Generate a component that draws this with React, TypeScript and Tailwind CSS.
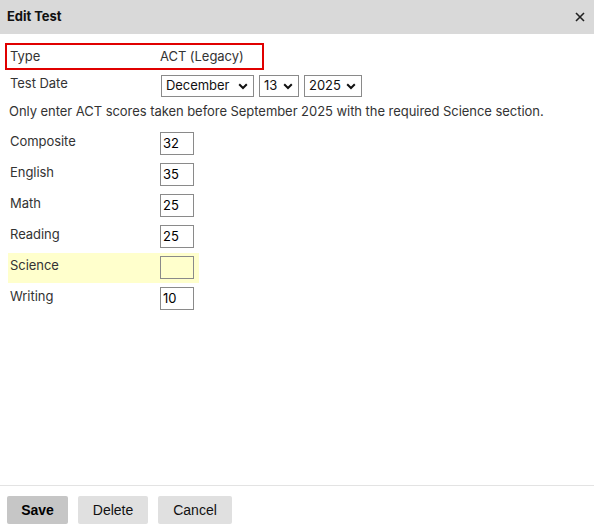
import React from "react";

const font = { fontFamily: 'Inter, "Liberation Sans", Arial, sans-serif' };
const btnFont = { fontFamily: '"Liberation Sans", Arial, sans-serif' };

function Chevron() {
  return (
    <svg width="10" height="7" viewBox="0 0 10 7" className="shrink-0">
      <path d="M1.2 1.3 L5 5 L8.8 1.3" fill="none" stroke="#111" strokeWidth="2" />
    </svg>
  );
}

function FakeSelect({ value, width }: { value: string; width: string }) {
  return (
    <div
      className={`${width} h-[22px] border border-[#8a8a8a] bg-white flex items-center justify-between pl-[4px] pr-[5px] text-[13px] text-[#111]`}
    >
      <span>{value}</span>
      <Chevron />
    </div>
  );
}

const scores: { label: string; value: string; highlight?: boolean }[] = [
  { label: "Composite", value: "32" },
  { label: "English", value: "35" },
  { label: "Math", value: "25" },
  { label: "Reading", value: "25" },
  { label: "Science", value: "", highlight: true },
  { label: "Writing", value: "10" },
];

export default function App() {
  return (
    <div
      className="w-[594px] h-[531px] bg-white flex flex-col text-[13px] tracking-[-0.05px] text-[#333]"
      style={font}
    >
      {/* title bar */}
      <div className="h-[34px] shrink-0 bg-[#d9d9d9] flex items-center justify-between pl-[7px] pr-[9px]">
        <span className="font-bold text-[13px] text-[#111]">Edit Test</span>
        <svg width="10" height="10" viewBox="0 0 10 10">
          <path d="M1 1 L9 9 M9 1 L1 9" stroke="#222" strokeWidth="1.6" />
        </svg>
      </div>

      {/* form body */}
      <div className="flex-1 flex flex-col pt-[9px]">
        <div className="ml-[5px] w-[259px] h-[27px] border-2 border-[#e00000] flex items-center">
          <span className="w-[153px] pl-[3px]">Type</span>
          <span>ACT (Legacy)</span>
        </div>

        <div className="mt-[5px] flex items-start">
          <span className="w-[161px] pl-[10px] leading-[16px]">Test Date</span>
          <div className="flex gap-[5px]">
            <FakeSelect value="December" width="w-[93px]" />
            <FakeSelect value="13" width="w-[40px]" />
            <FakeSelect value="2025" width="w-[58px]" />
          </div>
        </div>

        <p className="mt-[6px] pl-[9px] leading-[16px]">
          Only enter ACT scores taken before September 2025 with the required Science section.
        </p>

        <div className="mt-[10px] ml-[8px] flex flex-col gap-[1px]">
          {scores.map((s) => (
            <div
              key={s.label}
              className={`w-[191px] h-[30px] flex items-start pt-[3px] ${s.highlight ? "bg-[#ffffcc]" : ""}`}
            >
              <span className="w-[152px] pl-[2px] leading-[18px]">{s.label}</span>
              <div className="w-[34px] h-[23px] border border-[#8a8a8a] bg-transparent flex items-center pl-[2px] text-[13px] text-[#000]">
                {s.value}
              </div>
            </div>
          ))}
        </div>
      </div>

      {/* footer actions */}
      <div
        className="h-[46px] shrink-0 border-t border-[#e3e3e3] flex items-start pt-[10px] pl-[7px] gap-[10px] tracking-normal"
        style={btnFont}
      >
        <button className="w-[61px] h-[28px] rounded-[2px] bg-[#c6c6c6] font-bold text-[14px] text-[#000]">Save</button>
        <button className="w-[70px] h-[28px] rounded-[2px] bg-[#e0e0e0] text-[14px] text-[#111]">Delete</button>
        <button className="w-[74px] h-[28px] rounded-[2px] bg-[#e0e0e0] text-[14px] text-[#111]">Cancel</button>
      </div>
    </div>
  );
}
